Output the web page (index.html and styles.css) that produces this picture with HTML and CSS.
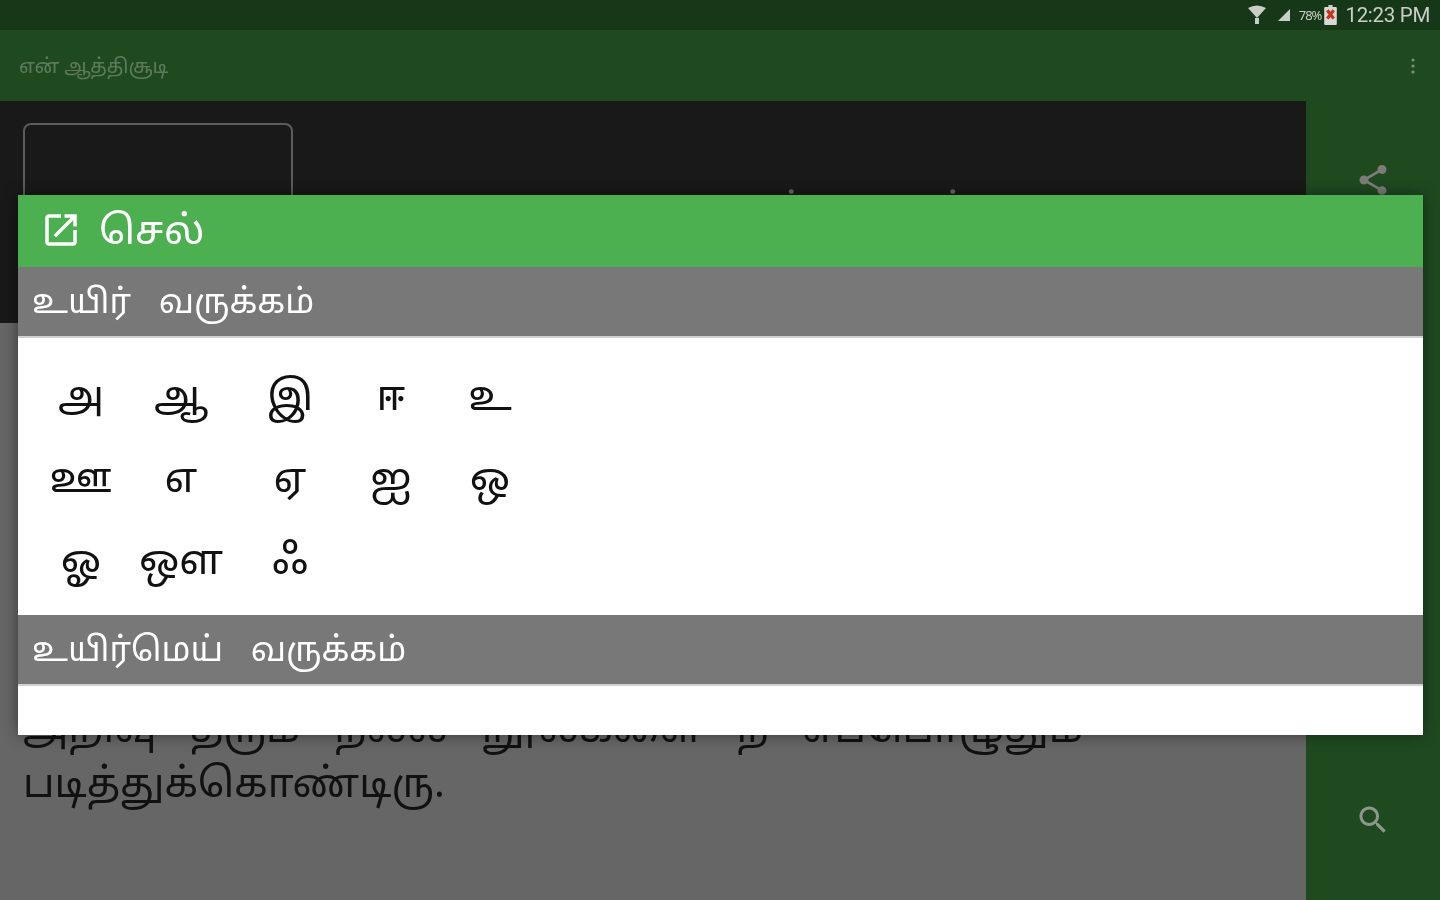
FILE: index.html
```html
<!DOCTYPE html>
<html lang="ta">
<head>
  <meta charset="UTF-8">
  <title>என் ஆத்திசூடி</title>
  <link rel="stylesheet" href="styles.css">
</head>
<body>
  <div class="statusbar">
    <svg class="st-wifi" width="20" height="22" viewBox="0 0 20 22"><path d="M1 4 Q10 -1 19 4 L10 14Z" fill="#c9cfc8"/><rect x="8" y="14" width="4" height="6" fill="#c9cfc8"/></svg>
    <svg class="st-signal" width="14" height="14" viewBox="0 0 14 14"><path d="M1 13 L13 1 V13Z" fill="#c9cfc8"/></svg>
    <span class="st-batt-text">78%</span>
    <svg class="st-batt" width="13" height="21" viewBox="0 0 12 20"><rect x="4" y="0" width="4" height="2" fill="#c9cfc8"/><rect x="0" y="2" width="12" height="17" rx="1" fill="#d8d8d4"/><path d="M3 5 L9 13 M9 5 L3 13" stroke="#c8321e" stroke-width="3"/></svg>
    <span class="st-time">12:23 PM</span>
  </div>
  <div class="toolbar">
    <span class="app-title">என் ஆத்திசூடி</span>
    <svg class="overflow" width="4" height="18" viewBox="0 0 4 18" fill="#7f8f7c"><circle cx="2" cy="3" r="1.6"/><circle cx="2" cy="9" r="1.6"/><circle cx="2" cy="15" r="1.6"/></svg>
  </div>
  <div class="main">
    <div class="content">
      <div class="hero">
        <div class="hero-card"></div>
        <div class="hero-title">நூல் பல கல்</div>
      </div>
      <div class="verse">
        <p>அறிவு தரும் நல்ல நூல்களை நீ எப்பொழுதும் படித்துக்கொண்டிரு.</p>
      </div>
    </div>
    <div class="rail">
      <svg width="36" height="36" viewBox="0 0 24 24" fill="#7d7d78"><path d="M18 16.1c-.8 0-1.4.3-2 .8l-7.100-4.200c.1-.2.100-.5.100-.7s0-.5-.1-.7L16 7.200c.5.5 1.200.8 2 .8 1.700 0 3-1.300 3-3s-1.300-3-3-3-3 1.300-3 3c0 .2 0 .5.100.7L8 9.800C7.500 9.300 6.800 9 6 9c-1.700 0-3 1.300-3 3s1.300 3 3 3c.8 0 1.500-.3 2-.8l7.100 4.200c-.1.200-.1.400-.1.600 0 1.600 1.300 2.900 3 2.900s3-1.300 3-2.900-1.300-2.900-3-2.900z"/></svg>
      <svg width="36" height="36" viewBox="0 0 24 24" fill="#8f968c"><path d="M15.500 14h-.8l-.3-.3c1-1.100 1.600-2.600 1.600-4.200C16 5.900 13.100 3 9.500 3S3 5.900 3 9.500 5.900 16 9.500 16c1.600 0 3.100-.6 4.200-1.600l.3.3v.8l5 5 1.500-1.500-5-5zm-6 0C7 14 5 12 5 9.500S7 5 9.500 5 14 7 14 9.500 12 14 9.500 14z"/></svg>
    </div>
  </div>

  <div class="dialog">
    <div class="dialog-head">
      <svg width="42" height="42" viewBox="0 0 24 24" fill="#fff"><path d="M19 19H5V5h7V3H5c-1.100 0-2 .9-2 2v14c0 1.100.9 2 2 2h14c1.100 0 2-.9 2-2v-7h-2v7zM14 3v2h3.600l-9.800 9.800 1.400 1.400L19 6.400V10h2V3h-7z"/></svg>
      <span>செல்</span>
    </div>
    <div class="section-head">உயிர் &nbsp;வருக்கம்</div>
    <div class="letters">
      <span>அ</span><span>ஆ</span><span>இ</span><span>ஈ</span><span>உ</span>
      <span>ஊ</span><span>எ</span><span>ஏ</span><span>ஐ</span><span>ஒ</span>
      <span>ஓ</span><span>ஔ</span><span>ஃ</span>
    </div>
    <div class="section-head">உயிர்மெய் &nbsp;வருக்கம்</div>
    <div class="letters-rest"></div>
  </div>
</body>
</html>
```

FILE: styles.css
```css
* {
  box-sizing: border-box;
}
html, body {
  height: 100%;
}
body {
  margin: 0;
  height: 900px;
  overflow: hidden;
  display: flex;
  flex-direction: column;
  font-family: "Noto Sans", "Noto Sans Tamil", "Lohit Tamil", "Liberation Sans", sans-serif;
  background-color: #666;
  filter: blur(0.6px);
}
.statusbar {
  height: 30px;
  flex: none;
  background-color: #163818;
  color: #c9cfc8;
  display: flex;
  align-items: center;
  justify-content: flex-end;
  padding-right: 10px;
}
.st-wifi {
  margin-right: 10px;
}
.st-signal {
  margin-right: 8px;
}
.st-batt-text {
  font-size: 13px;
  letter-spacing: -1px;
  margin-right: 3px;
}
.st-batt {
  margin-right: 8px;
}
.st-time {
  font-size: 20.500px;
  font-family: Roboto, sans-serif;
  letter-spacing: -0.3px;
}
.toolbar {
  height: 71px;
  flex: none;
  background-color: #1f4a20;
  display: flex;
  align-items: center;
  justify-content: space-between;
  padding: 0 25px 0 19px;
}
.app-title {
  font-size: 20px;
  color: #5f7a5a;
}
.main {
  flex: 1;
  display: flex;
}
.content {
  flex: 1;
  display: flex;
  flex-direction: column;
}
.hero {
  height: 222px;
  background-color: #191919;
  padding: 22px 0 0 23px;
  display: flex;
  align-items: flex-start;
}
.hero-card {
  width: 270px;
  height: 160px;
  flex: none;
  border: 2px solid #5c5c5c;
  border-radius: 8px;
}
.hero-title {
  margin: 58px 0 0 430px;
  font-size: 36px;
  color: #666;
  word-spacing: 6px;
  white-space: nowrap;
}
.verse {
  flex: 1;
  background-color: #666;
  padding: 376px 23px 0;
}
.verse p {
  margin: 0;
  font-size: 40.500px;
  line-height: 55px;
  color: #111;
  word-spacing: 23px;
  max-width: 1100px;
}
.rail {
  width: 134px;
  flex: none;
  background-color: #1f4a20;
  display: flex;
  flex-direction: column;
  align-items: center;
  padding: 61px 0 62px;
  justify-content: space-between;
}
.dialog {
  position: absolute;
  left: 18px;
  top: 195px;
  width: 1405px;
  height: 540px;
  background-color: #fff;
  box-shadow: 0 0 14px rgba(0, 0, 0, 0.45);
  display: flex;
  flex-direction: column;
}
.dialog-head {
  height: 72px;
  flex: none;
  background-color: #4caf50;
  color: #fff;
  display: flex;
  align-items: center;
  gap: 17px;
  padding: 0 0 3px 22px;
  font-size: 40px;
}
.section-head {
  height: 71px;
  flex: none;
  background-color: #787878;
  color: #fff;
  display: flex;
  align-items: center;
  padding-left: 14px;
  font-size: 33.800px;
  word-spacing: 5px;
  border-bottom: 2px solid #d0d0d0;
}
.letters {
  height: 277px;
  flex: none;
  display: grid;
  grid-template-columns: 100px 100px 118px 84px 114px;
  grid-auto-rows: 82px;
  padding: 16px 0 0 13px;
  align-items: center;
  justify-items: center;
  font-size: 41px;
  color: #111;
}
.letters-rest {
  flex: 1;
}
```
